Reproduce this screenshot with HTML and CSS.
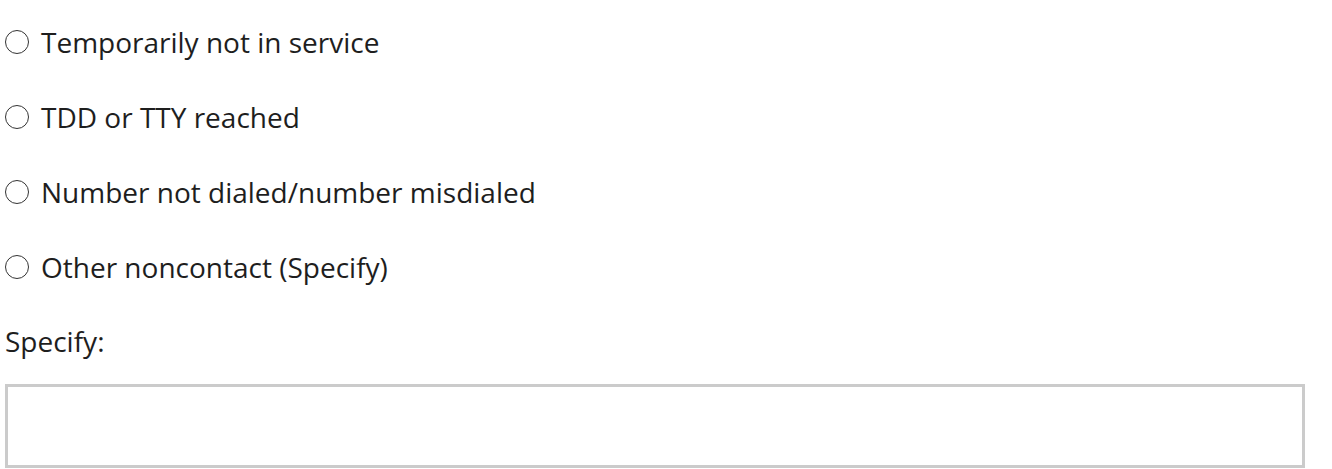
FILE: index.html
```html
<!DOCTYPE html>
<html lang="en">
<head>
<meta charset="utf-8">
<title>Noncontact</title>
<link rel="stylesheet" href="styles.css">
</head>
<body>
<form class="form">
  <label class="option"><input type="radio" name="nc" class="radio"><span class="text">Temporarily not in service</span></label>
  <label class="option"><input type="radio" name="nc" class="radio"><span class="text">TDD or TTY reached</span></label>
  <label class="option"><input type="radio" name="nc" class="radio"><span class="text">Number not dialed/number misdialed</span></label>
  <label class="option"><input type="radio" name="nc" class="radio"><span class="text">Other noncontact (Specify)</span></label>
  <label class="specify-label" for="spec">Specify:</label>
  <input type="text" id="spec" class="specify-input">
</form>
</body>
</html>
```
FILE: styles.css
```css
html, body {
  margin: 0;
  padding: 0;
  background: #fff;
}
body {
  font-family: "Open Sans", "Noto Sans", sans-serif;
  font-size: 28px;
  color: #1e1e1e;
}
.form {
  display: flex;
  flex-direction: column;
  padding: 4px 0 0 5px;
}
.option {
  display: flex;
  align-items: center;
  height: 75px;
  gap: 12px;
}
.radio {
  appearance: none;
  -webkit-appearance: none;
  margin: 1px 0 0;
  width: 24px;
  height: 24px;
  border: 1.5px solid #333;
  border-radius: 50%;
  box-sizing: border-box;
  background: #fff;
  flex: none;
}
.text {
  white-space: nowrap;
}
.specify-label {
  display: flex;
  align-items: center;
  height: 74px;
}
.specify-input {
  box-sizing: border-box;
  margin-top: 6px;
  width: 1300px;
  height: 84px;
  border: 3px solid #cbcbcb;
  border-radius: 0;
  outline: none;
  font: inherit;
  padding: 0 10px;
}
```
